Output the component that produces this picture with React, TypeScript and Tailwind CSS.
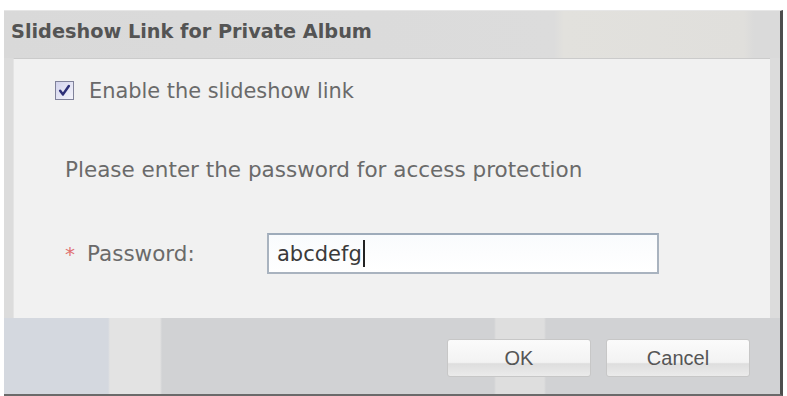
import React from "react";

const sans = { fontFamily: '"DejaVu Sans", Verdana, sans-serif' };

export default function App() {
  return (
    <div className="w-[787px] h-[396px] bg-white overflow-hidden">
      <div className="ml-[4px] mt-[10px] w-[779px] h-[386px] flex flex-col border-r-[3px] border-b-[2px] border-r-[#4d4d4d] border-b-[#6a6a6a] bg-[#dadada] border-t border-t-[#e6e6e6]">
        {/* header */}
        <div className="h-[47px] flex items-center pl-[7px] pb-[4px] bg-[linear-gradient(to_right,#d9d9d9_0,#dcdcdc_550px,#e2e1dd_560px,#e0dfdc_740px,#dadada_750px)]">
          <span className="text-[19.3px] font-bold text-[#545454]" style={sans}>
            Slideshow Link for Private Album
          </span>
        </div>
        {/* body */}
        <div className="pl-[9px] pr-[10px] bg-[#dcdcdc]">
          <div
            className="h-[260px] bg-[#f1f1f1] border-t border-t-[#cbcbcb] border-l border-l-[#e4e4e4] flex flex-col"
            style={sans}
          >
            <div className="pt-[22px] pl-[41px] flex items-center h-[41px]">
              <div className="w-[19px] h-[19px] border-[1.5px] border-[#80829a] bg-[linear-gradient(135deg,#d2d3ec,#f4f4fb)] flex items-center justify-center">
                <svg width="13" height="13" viewBox="0 0 12 12">
                  <path
                    d="M2 6.2 L4.6 9.6 L10 1.8"
                    fill="none"
                    stroke="#2d2f78"
                    strokeWidth="2.3"
                    strokeLinejoin="round"
                    strokeLinecap="round"
                  />
                </svg>
              </div>
              <span className="ml-[15px] text-[20.9px] leading-[24px] text-[#6a6a6a]">
                Enable the slideshow link
              </span>
            </div>
            <div className="mt-[58px] pl-[51px] text-[21.5px] leading-[24px] text-[#6a6a6a]">
              Please enter the password for access protection
            </div>
            <div className="mt-[51px] pl-[51px] flex items-center h-[41px]">
              <span className="text-[20px] text-[#e07070] w-[22px] leading-[24px]">*</span>
              <span className="text-[21.5px] leading-[24px] text-[#6a6a6a] w-[180px]">
                Password:
              </span>
              <div className="w-[392px] h-[41px] border-2 border-[#a9b3bf] border-t-[#9eabba] bg-[linear-gradient(#f9fbfd,#ffffff)] flex items-center pl-[8px]">
                <span className="text-[21px] leading-[26px] text-[#3a3a3a]">abcdefg</span>
                <span className="ml-[1px] w-[2px] h-[27px] bg-[#222]" />
              </div>
            </div>
          </div>
        </div>
        {/* footer */}
        <div className="flex-1 flex justify-end items-start pt-[21px] pr-[30px] gap-[15px] bg-[linear-gradient(to_right,#d4d8df_0,#d4d8df_104px,#e3e3e3_106px,#e3e3e3_156px,#d1d2d4_158px,#d1d2d4_490px,#dedede_492px,#dedede_540px,#d1d2d4_542px)]">
          {["OK", "Cancel"].map((t) => (
            <div
              key={t}
              className="w-[144px] h-[38px] rounded-[3px] border border-[#c7c7c7] bg-[linear-gradient(#fbfbfb,#f3f3f3_62%,#dedede_66%,#ebebeb)] flex items-center justify-center text-[20px] text-[#555]"
              style={{ fontFamily: '"Liberation Sans", Arial, sans-serif' }}
            >
              {t}
            </div>
          ))}
        </div>
      </div>
    </div>
  );
}
